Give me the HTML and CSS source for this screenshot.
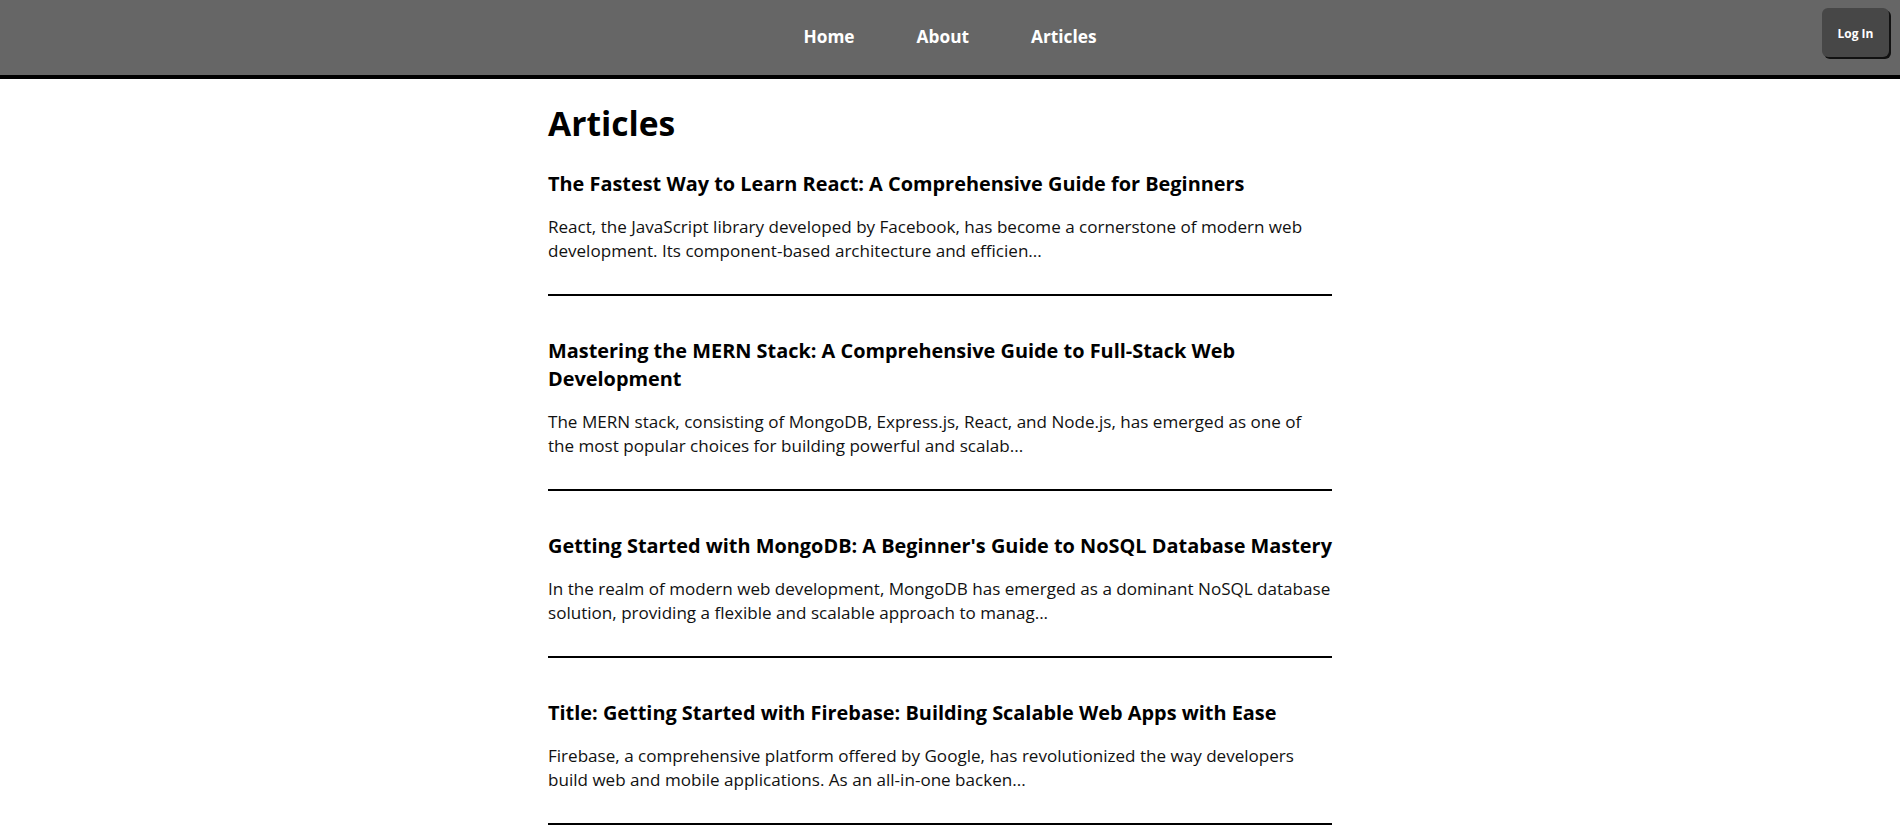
FILE: index.html
```html
<!DOCTYPE html>
<html lang="en">
<head>
<meta charset="utf-8">
<title>Articles</title>
<link rel="stylesheet" href="styles.css">
</head>
<body>
<header class="site-header">
  <div class="spacer"></div>
  <nav class="nav">
    <a class="nav-link" href="#">Home</a>
    <a class="nav-link" href="#">About</a>
    <a class="nav-link" href="#">Articles</a>
  </nav>
  <div class="actions">
    <button class="login-btn" type="button">Log In</button>
  </div>
</header>
<main class="content">
  <h1 class="page-title">Articles</h1>
  <article class="article">
    <h2 class="article-title">The Fastest Way to Learn React: A Comprehensive Guide for Beginners</h2>
    <p class="article-excerpt">React, the JavaScript library developed by Facebook, has become a cornerstone of modern web development. Its component-based architecture and efficien...</p>
    <hr class="divider">
  </article>
  <article class="article">
    <h2 class="article-title">Mastering the MERN Stack: A Comprehensive Guide to Full-Stack Web Development</h2>
    <p class="article-excerpt">The MERN stack, consisting of MongoDB, Express.js, React, and Node.js, has emerged as one of the most popular choices for building powerful and scalab...</p>
    <hr class="divider">
  </article>
  <article class="article">
    <h2 class="article-title">Getting Started with MongoDB: A Beginner's Guide to NoSQL Database Mastery</h2>
    <p class="article-excerpt">In the realm of modern web development, MongoDB has emerged as a dominant NoSQL database solution, providing a flexible and scalable approach to manag...</p>
    <hr class="divider">
  </article>
  <article class="article">
    <h2 class="article-title">Title: Getting Started with Firebase: Building Scalable Web Apps with Ease</h2>
    <p class="article-excerpt">Firebase, a comprehensive platform offered by Google, has revolutionized the way developers build web and mobile applications. As an all-in-one backen...</p>
    <hr class="divider">
  </article>
</main>
</body>
</html>
```
FILE: styles.css
```css
* { box-sizing: border-box; }

body {
  margin: 0;
  font-family: "Open Sans", "Noto Sans", sans-serif;
  color: #000;
  background: #fff;
}

.site-header {
  display: grid;
  grid-template-columns: 1fr auto 1fr;
  align-items: center;
  height: 79px;
  background: #666666;
  border-bottom: 4px solid #000;
}

.nav {
  display: flex;
  gap: 62px;
  align-items: center;
  padding-bottom: 2px;
}

.nav-link {
  color: #fff;
  text-decoration: none;
  font-weight: 700;
  font-size: 17.3px;
  line-height: 24px;
}

.actions {
  display: flex;
  justify-content: flex-end;
  align-self: start;
  padding-top: 8px;
  padding-right: 11px;
}

.login-btn {
  width: 67px;
  height: 49px;
  background: #474747;
  color: #fff;
  border: none;
  border-radius: 6px;
  box-shadow: 2px 2px 0 #111;
  font-family: "Open Sans", "Noto Sans", sans-serif;
  font-weight: 700;
  font-size: 12px;
  padding: 2px 0 0;
  cursor: pointer;
}

.content {
  width: 804px;
  margin: 0 auto;
  padding-top: 20px;
}

.page-title {
  margin: 0 0 23px;
  font-size: 33.6px;
  line-height: 48px;
  font-weight: 700;
}

.article-title {
  margin: 0 0 17px;
  font-size: 19.9px;
  line-height: 28px;
  font-weight: 700;
}

.article-excerpt {
  margin: 0 21px 0 0;
  font-size: 17.07px;
  line-height: 24px;
  color: #111;
}

.divider {
  margin: 31px 20px 41px 0;
  border: none;
  height: 2px;
  background: #000;
}
```
